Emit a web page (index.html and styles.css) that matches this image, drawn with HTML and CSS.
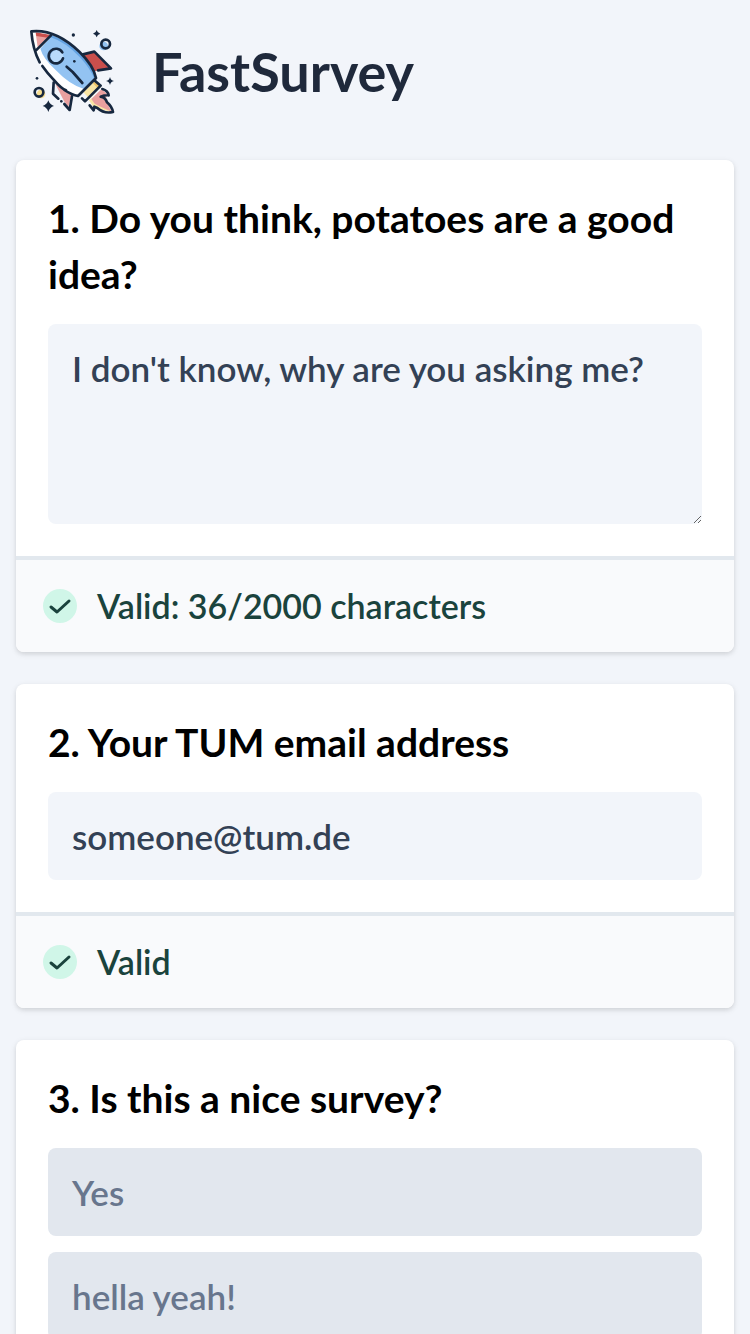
FILE: index.html
```html
<!DOCTYPE html>
<html lang="en">
<head>
<meta charset="utf-8">
<meta name="viewport" content="width=device-width, initial-scale=1">
<title>FastSurvey</title>
<link rel="stylesheet" href="styles.css">
</head>
<body>
<header class="header">
  <svg class="logo" viewBox="27 27 288 288" aria-hidden="true">
    <path fill="#fff" d="M49 48 63 108 Q76 148 113 197 Q148 230 187 243L243 189Q240 160 197 116Q150 65 107 54Z"/>
    <path fill="#93c3f2" d="M110 62Q165 82 206 133Q235 166 240 189L207 222Q165 210 122 165Q84 130 76 101Z"/>
    <path fill="#65a4e3" d="M110 60Q165 78 206 128Q238 163 243 188L238 192Q226 160 194 126Q154 82 104 65Z"/>
    <path fill="#e9a09f" d="M62 55 105 62 68 96Z"/>
    <path fill="#c94f4c" d="M62 52 107 60 98 68 64 63Z"/>
    <path fill="#c94f4c" d="M205 121 238 111 286 160 250 166 238 169Q225 140 205 121Z"/>
    <path fill="#e9a09f" d="M121 207 169 241 160 276 147 258Z"/>
    <path fill="#f8e5a5" d="M205 232 240 198 259 214 224 252Z"/>
    <path fill="#edc366" d="M233 204 240 198 259 214 251 222Z"/>
    <path fill="#f8e5a5" d="M222 256 239 282 264 284 290 292 264 252 236 246Z"/>
    <path fill="#e9a09f" d="M229 252 259 223 275 235 273 259 290 290 260 277 239 266Z"/>
    <circle fill="#b9dafa" cx="126" cy="124" r="19"/>
    <circle fill="#93c3f2" cx="266" cy="93" r="13"/>
    <circle fill="#f8df91" cx="78" cy="237" r="13"/>
    <g class="logo-lines">
      <path d="M74 142Q53 102 49 49Q121 41 193 110Q236 152 243 189L189 243Q171 240 148 225M82 153Q98 176 115 193Q139 221 153 226M63 106 108 61"/>
      <path d="M142 112A22 22 0 1 0 144 130M155 155 173 171 202 204"/>
      <path d="M204 118 238 110 288 160 249 166M116 203 114 236 130 251M171 244 164 285 148 267"/>
      <path d="M201 250 210 259 257 212 238 196M262 222Q279 227 281 241Q269 240 257 245Q272 248 276 262Q291 275 294 291Q267 297 247 279L238 275 236 286 224 271"/>
      <circle cx="272" cy="87" r="13"/>
      <circle cx="72" cy="232" r="13"/>
    </g>
    <g fill="#17283f">
      <path d="M245 45Q247 54 256 56Q247 58 245 67Q243 58 234 56Q243 54 245 45Z"/>
      <path d="M285 186Q287 196 297 198Q287 200 285 210Q283 200 273 198Q283 196 285 186Z"/>
      <path d="M100 256Q104 269 117 273Q104 277 100 291Q96 277 83 273Q96 269 100 256Z"/>
      <circle cx="175" cy="60" r="5"/><circle cx="178" cy="139" r="4"/><circle cx="66" cy="190" r="4"/><circle cx="139" cy="259" r="4"/>
    </g>
  </svg>
  <h1 class="brand">FastSurvey</h1>
</header>
<main class="survey">
  <section class="card">
    <div class="card-body">
      <h2 class="question"><label for="potatoes">1. Do you think, potatoes are a good idea?</label></h2>
      <textarea class="field field-long" id="potatoes">I don't know, why are you asking me?</textarea>
    </div>
    <div class="status">
      <svg class="check" viewBox="0 0 34 34" aria-hidden="true"><circle cx="17" cy="17" r="17"/><path d="m8 18 6 5 12-11"/></svg>
      <span>Valid: 36/2000 characters</span>
    </div>
  </section>
  <section class="card">
    <div class="card-body">
      <h2 class="question"><label for="email">2. Your TUM email address</label></h2>
      <input class="field" id="email" type="email" value="someone@tum.de">
    </div>
    <div class="status">
      <svg class="check" viewBox="0 0 34 34" aria-hidden="true"><circle cx="17" cy="17" r="17"/><path d="m8 18 6 5 12-11"/></svg>
      <span>Valid</span>
    </div>
  </section>
  <section class="card">
    <div class="card-body">
      <h2 class="question">3. Is this a nice survey?</h2>
      <div class="options">
        <button class="option" type="button">Yes</button>
        <button class="option" type="button">hella yeah!</button>
      </div>
    </div>
  </section>
</main>
</body>
</html>
```

FILE: styles.css
```css
* {
  box-sizing: border-box;
}

body {
  margin: 0;
  background: #f2f5fa;
  color: #000;
  font-family: Lato, sans-serif;
  font-size: 35px;
  font-weight: 600;
  line-height: 48px;
}

.header {
  display: flex;
  align-items: center;
  gap: 32px;
  padding: 24px 24px 40px;
}

.logo {
  width: 96px;
  height: 96px;
  flex: none;
}

.logo-lines {
  fill: none;
  stroke: #17283f;
  stroke-width: 8;
  stroke-linecap: round;
  stroke-linejoin: round;
}

.brand {
  margin: 0;
  color: #1f293b;
  font-size: 54px;
  font-weight: 700;
}

.survey {
  display: grid;
  gap: 32px;
  padding: 0 16px 32px;
}

.card {
  overflow: hidden;
  border-radius: 8px;
  background: #fff;
  box-shadow: 0 2px 6px rgba(0, 0, 0, 0.1), 0 2px 4px rgba(0, 0, 0, 0.06);
}

.card-body {
  display: grid;
  gap: 22px;
  padding: 30px 32px 32px;
}

.question {
  margin: 0;
  font-size: 39px;
  font-weight: 700;
  line-height: 56px;
}

.field {
  display: block;
  width: 100%;
  height: 88px;
  margin: 0;
  padding: 20px 24px;
  border: 0;
  border-radius: 8px;
  background: #f2f5fa;
  color: #334155;
  font: inherit;
}

.field-long {
  height: 200px;
  resize: vertical;
}

.status {
  display: flex;
  align-items: center;
  gap: 20px;
  padding: 22px 27px;
  border-top: 4px solid #e2e8ee;
  background: #f9fafc;
  color: #1a433d;
  font-size: 34px;
}

.check {
  width: 34px;
  height: 34px;
  flex: none;
  fill: #d0f6e8;
}

.check path {
  fill: none;
  stroke: #1a433d;
  stroke-width: 3;
  stroke-linecap: round;
  stroke-linejoin: round;
}

.options {
  display: grid;
  gap: 16px;
}

.option {
  padding: 20px 24px;
  border: 0;
  border-radius: 8px;
  background: #e2e7ee;
  color: #68768d;
  font: inherit;
  text-align: left;
}
```
